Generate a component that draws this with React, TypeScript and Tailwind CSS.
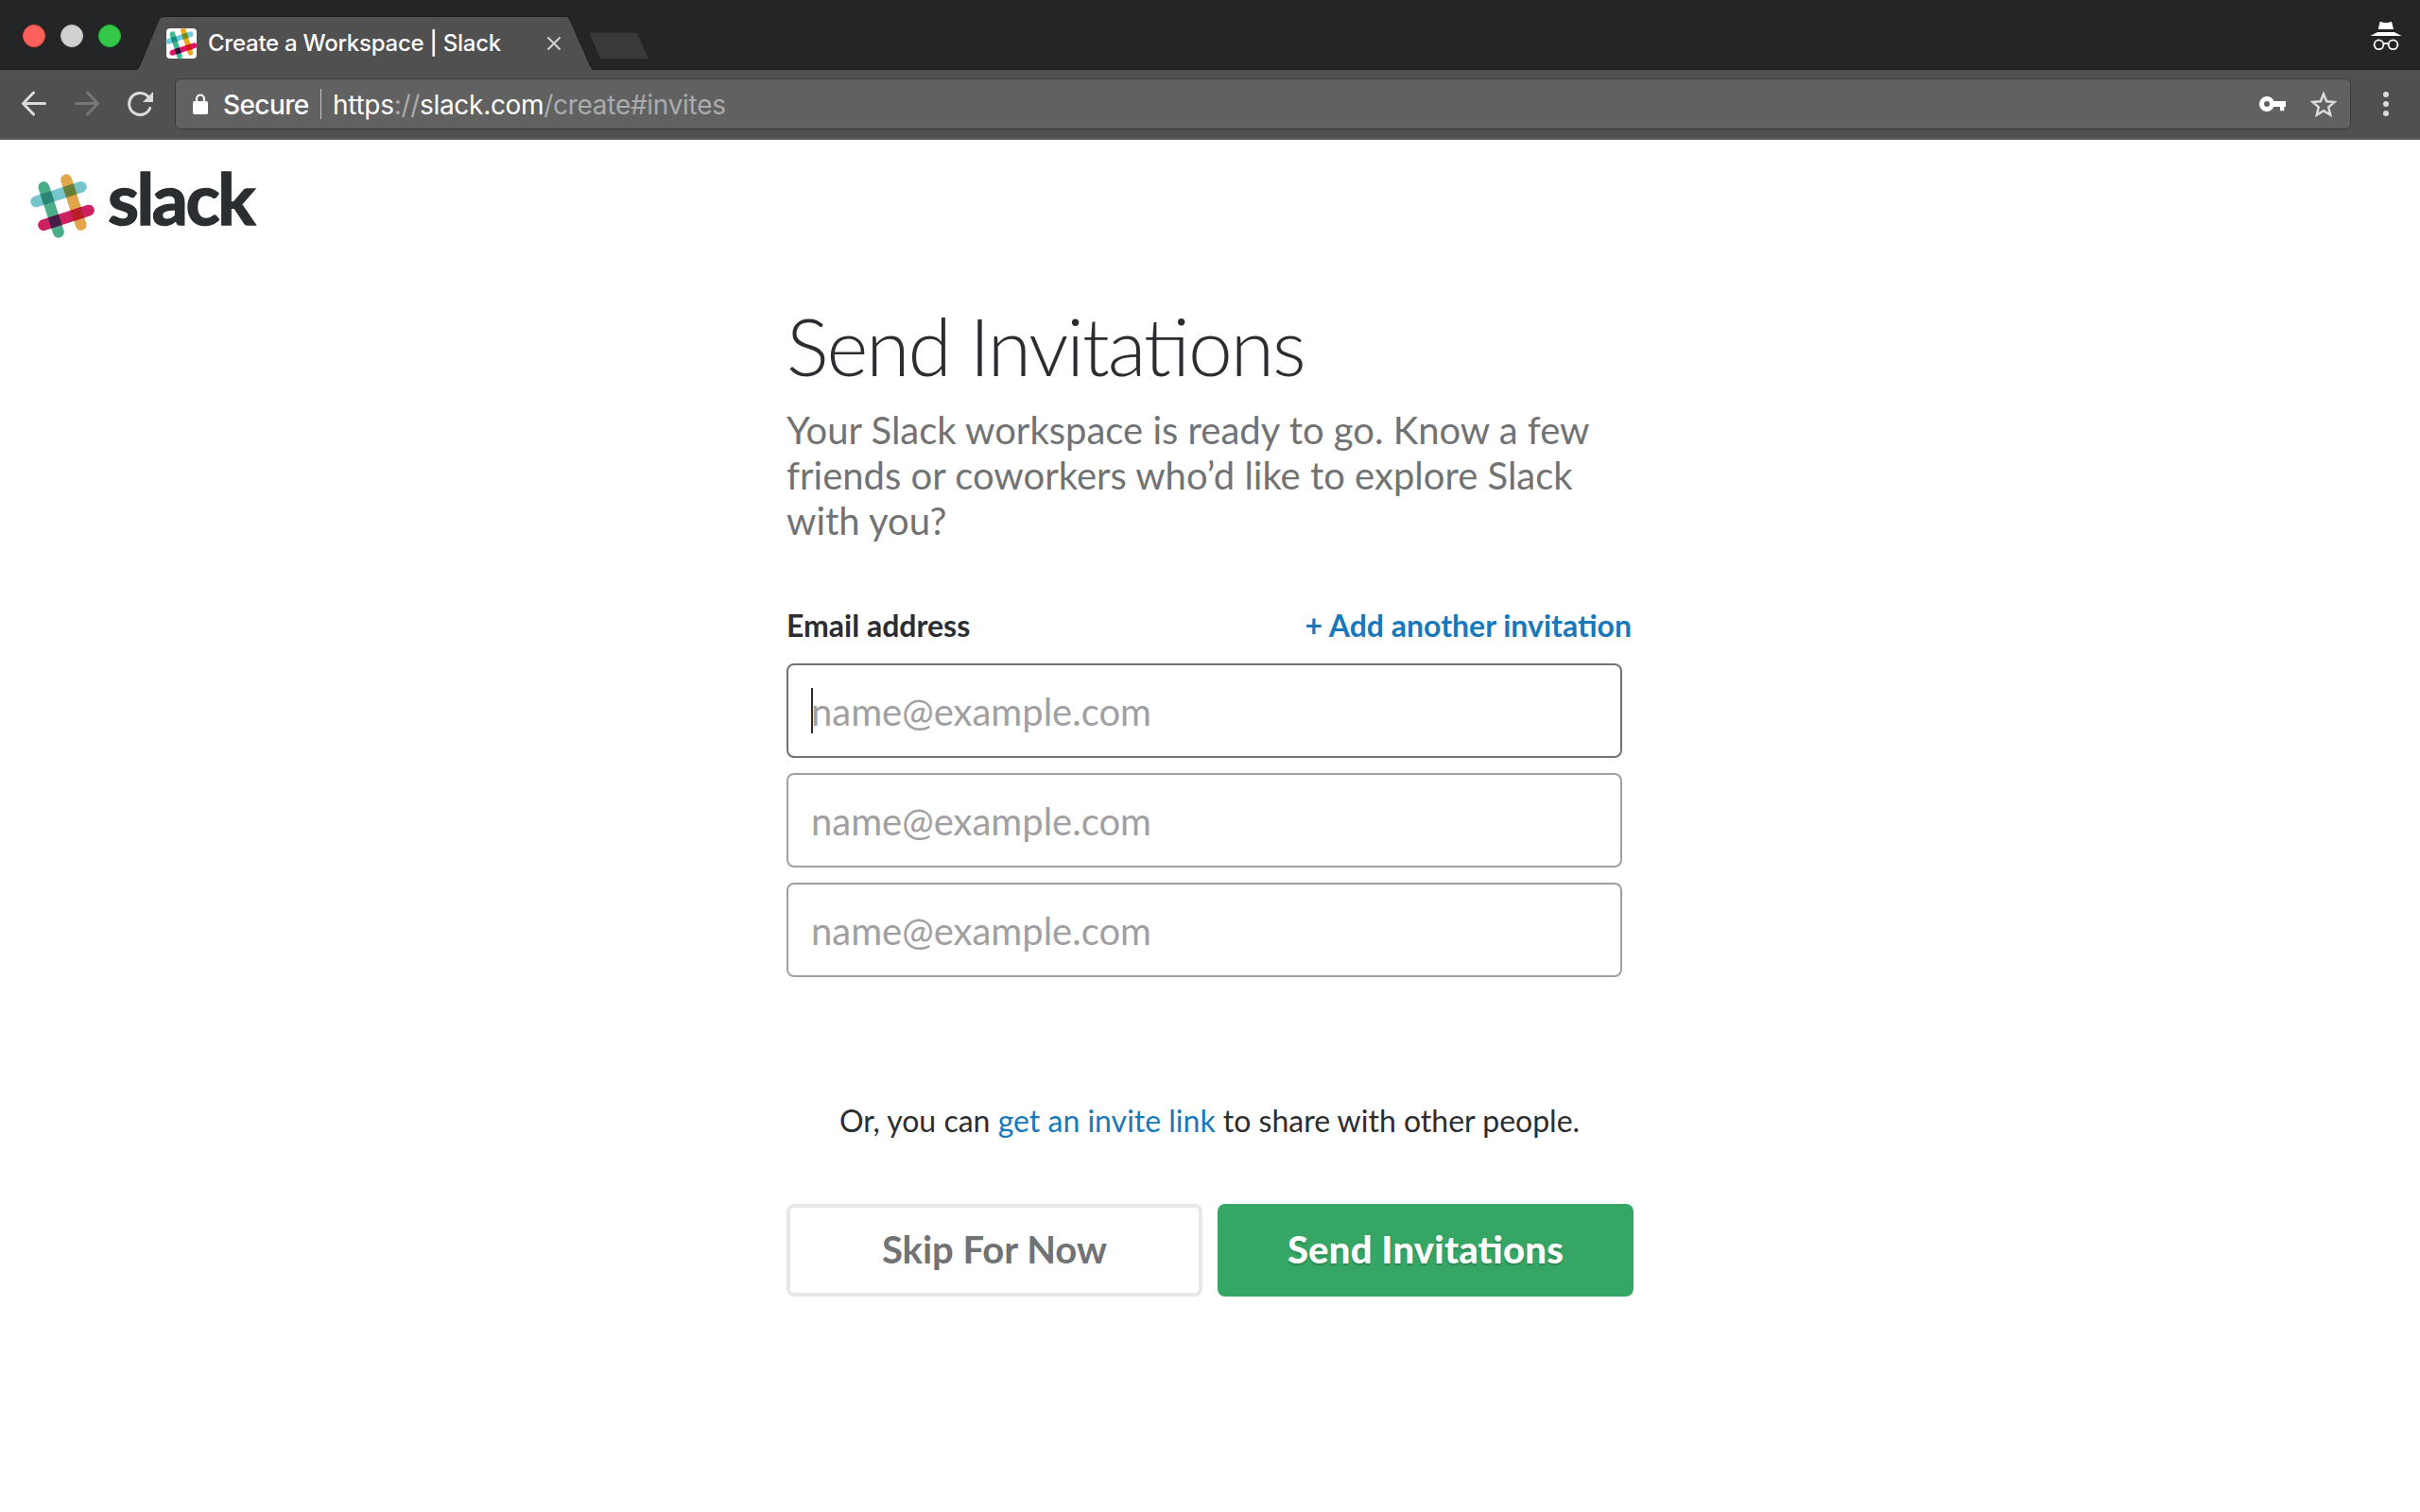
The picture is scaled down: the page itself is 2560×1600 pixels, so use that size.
import React from "react";

type HashColors = {
  blue: string;
  green: string;
  orange: string;
  red: string;
  blueGreen: string;
  blueOrange: string;
  redGreen: string;
  redOrange: string;
};

const logoColors: HashColors = {
  blue: "#77c5cc",
  green: "#4aaf88",
  orange: "#e1a64c",
  red: "#cc2060",
  blueGreen: "#2c8674",
  blueOrange: "#66803b",
  redGreen: "#431f46",
  redOrange: "#bb1f2a",
};

const faviconColors: HashColors = {
  blue: "#6fcbdf",
  green: "#3eb991",
  orange: "#ebab20",
  red: "#e31466",
  blueGreen: "#16927c",
  blueOrange: "#6e8a1e",
  redGreen: "#340b36",
  redOrange: "#cf1b14",
};

function SlackHash({ colors, className }: { colors: HashColors; className: string }) {
  return (
    <svg viewBox="-35 -35 70 70" className={className}>
      <g transform="rotate(-18)">
        <rect x="-31" y="-18.9" width="62" height="11.8" rx="5.9" fill={colors.blue} />
        <rect x="-18.4" y="-31" width="11.8" height="62" rx="5.9" fill={colors.green} />
        <rect x="6.6" y="-31" width="11.8" height="62" rx="5.9" fill={colors.orange} />
        <rect x="-31" y="7.1" width="62" height="11.8" rx="5.9" fill={colors.red} />
        <rect x="-18.4" y="-18.9" width="11.8" height="11.8" fill={colors.blueGreen} />
        <rect x="6.6" y="-18.9" width="11.8" height="11.8" fill={colors.blueOrange} />
        <rect x="-18.4" y="7.1" width="11.8" height="11.8" fill={colors.redGreen} />
        <rect x="6.6" y="7.1" width="11.8" height="11.8" fill={colors.redOrange} />
      </g>
    </svg>
  );
}

function TabStrip() {
  return (
    <div className="flex h-[74px] items-start border-b border-[#1b1c1e] bg-[#242527]">
      <div className="flex gap-4 pt-[26px] pl-6">
        <span className="size-6 rounded-full border border-[#e9514c] bg-[#fc605b]" />
        <span className="size-6 rounded-full border border-[#c4c4c4] bg-[#d0d0d0]" />
        <span className="size-6 rounded-full border border-[#27b637] bg-[#34c84a]" />
      </div>

      <div className="relative ml-3.5 flex h-[74px] w-[488px] shrink-0 pl-[34px]">
        <svg viewBox="0 0 488 74" className="absolute inset-0 h-[74px] w-[488px]">
          <path
            d="M1 74 Q4 74 5.500 70 L26 21 Q27.500 17.500 30 17.500 H457 Q459.500 17.500 461 21 L482.500 70 Q484 74 487 74Z"
            fill="#505050"
          />
          <path
            d="M1 73.500 Q4 73.500 5.500 70 L26 21 Q27.500 17.500 30 17.500 H457 Q459.500 17.500 461 21 L482.500 70 Q484 73.500 487 73.500"
            fill="none"
            stroke="#1b1c1e"
          />
        </svg>
        <span className="relative mt-[30px] flex size-8 shrink-0 items-center justify-center rounded bg-white">
          <SlackHash colors={faviconColors} className="size-[34px] shrink-0" />
        </span>
        <span className="relative mt-[30px] ml-3 w-[318px] text-[24px] leading-8 font-medium tracking-[-0.25px] whitespace-nowrap text-white">
          Create a Workspace | Slack
        </span>
        <svg viewBox="0 0 16 16" className="relative mt-[38px] ml-[40px] size-4" stroke="#d4d4d4" strokeWidth="2">
          <path d="M1.500 1.500 L14.500 14.500 M14.500 1.500 L1.500 14.500" />
        </svg>
      </div>

      <svg viewBox="0 0 66 32" className="mt-[33px] -ml-2 h-8 w-[66px]">
        <path
          d="M3 1 H49 Q52 1 53.500 4 L64 27.500 Q65 30 62.500 30 H16 Q13 30 11.500 27 L1.500 3.500 Q.5 1 3 1Z"
          fill="#393939"
          stroke="#1f2022"
        />
      </svg>

      <svg viewBox="0 0 34 32" className="mt-[22px] mr-[19px] ml-auto h-8 w-[34px]">
        <path d="M10.500 1.500 Q11 .5 12.500 1.200 Q17 3 21.500 1.200 Q22.500 .5 23.200 1.500 L25 9 H8.800Z" fill="#fff" />
        <path d="M8 12 H26 L33.500 16 H.5Z" fill="#fff" />
        <g fill="none" stroke="#fff" strokeWidth="1.800">
          <circle cx="9.500" cy="25.300" r="4.900" />
          <circle cx="24.500" cy="25.300" r="4.900" />
          <path d="M14 24.800 Q17 23 20 24.800" />
        </g>
      </svg>
    </div>
  );
}

function Toolbar() {
  return (
    <div className="flex h-[74px] items-center border-b-2 border-[#5e5e5e] bg-[#505050] pl-[22px]">
      <svg viewBox="0 0 28 28" className="size-7" fill="none" stroke="#dcdcdc" strokeWidth="3" strokeLinecap="round" strokeLinejoin="round">
        <path d="M25.500 13.500 H3 M13.500 2 L2.500 13.500 L13.500 25" />
      </svg>
      <svg viewBox="0 0 28 28" className="ml-7 size-7" fill="none" stroke="#777777" strokeWidth="3" strokeLinecap="round" strokeLinejoin="round">
        <path d="M2.500 13.500 H25 M14.500 2 L25.500 13.500 L14.500 25" />
      </svg>
      <svg viewBox="0 0 28 28" className="ml-7 size-7">
        <path
          d="M23.300 7 A11.500 11.500 0 1 0 24.700 18.500"
          fill="none"
          stroke="#dcdcdc"
          strokeWidth="3"
          strokeLinecap="round"
        />
        <path d="M28 1 V12 H17Z" fill="#dcdcdc" />
      </svg>

      <div className="ml-[23px] flex h-[54px] w-[2302px] items-center rounded-md border border-[#3b3b3b] bg-[#616161] pl-[18px]">
        <svg viewBox="0 0 16 22" className="h-[22px] w-4">
          <path d="M4 9 V5.500 A4 4 0 0 1 12 5.500 V9" fill="none" stroke="#fff" strokeWidth="2.200" />
          <rect y="8" width="16" height="14" rx="1.800" fill="#fff" />
        </svg>
        <span className="mt-0.5 ml-4 w-[103px] text-[28px] leading-8 font-medium tracking-[-0.6px] text-white">Secure</span>
        <span className="h-8 w-px bg-[#c9c9c9]" />
        <span className="mt-0.5 ml-3 text-[28px] leading-8 tracking-[-0.3px] whitespace-nowrap text-[#ababab]">
          <span className="text-white">https</span>://<span className="text-white">slack.com</span>/create#invites
        </span>
        <svg viewBox="0 0 28 16" className="mr-[25px] ml-auto h-4 w-7" fill="#fff">
          <path
            fillRule="evenodd"
            d="M8 0 A8 8 0 1 0 15.400 11 H22 V15.300 H26.300 V11 H28 V5 H15.400 A8 8 0 0 0 8 0 M8 5 A3 3 0 1 1 8 11 A3 3 0 1 1 8 5Z"
          />
        </svg>
        <svg viewBox="0 0 30 29" className="mr-[13px] h-[29px] w-[30px]">
          <path
            d="M15 3.500 L18.200 11.300 L26.500 12 L20.200 17.400 L22.200 25.600 L15 21.200 L7.800 25.600 L9.800 17.400 L3.500 12 L11.800 11.300Z"
            fill="none"
            stroke="#dcdcdc"
            strokeWidth="2.400"
          />
        </svg>
      </div>

      <div className="ml-[34px] flex flex-col gap-1">
        <span className="size-1.5 rounded-full bg-[#dcdcdc]" />
        <span className="size-1.5 rounded-full bg-[#dcdcdc]" />
        <span className="size-1.5 rounded-full bg-[#dcdcdc]" />
      </div>
    </div>
  );
}

function EmailField({ active = false }: { active?: boolean }) {
  return (
    <div
      className={
        active
          ? "flex h-[100px] w-[884px] items-center rounded-lg border-2 border-[#717274] pl-6"
          : "flex h-[100px] w-[884px] items-center rounded-lg border-2 border-[#a0a0a2] pl-6"
      }
    >
      {active && <span className="-mr-0.5 h-12 w-0.5 bg-[#2c2d30]" />}
      <span className="mt-0.5 text-[40px] leading-[48px] text-[#a0a0a2]">name@example.com</span>
    </div>
  );
}

export default function App() {
  return (
    <div className="h-[1600px] w-[2560px] overflow-hidden bg-white font-['Lato',sans-serif] text-[#2c2d30]">
      <header className="font-['Inter',sans-serif]">
        <TabStrip />
        <Toolbar />
      </header>

      <div className="flex h-[152px] items-start pt-[35px] pl-[31px]">
        <SlackHash colors={logoColors} className="size-[70px]" />
        <span className="-mt-3.5 ml-[13px] text-[75px] leading-[80px] font-bold tracking-[-2.4px] text-[#2b2e31] [-webkit-text-stroke:1.5px_#2b2e31]">
          slack
        </span>
      </div>

      <main className="ml-[832px] w-[896px]">
        <h1 className="pt-[16px] text-[84px] leading-[100px] font-light tracking-[-2px] [font-feature-settings:'liga'_1]">
          Send Invitations
        </h1>
        <p className="pt-[15px] text-[40px] leading-[48px] text-[#717274]">
          Your Slack workspace is ready to go. Know a few
          <br />
          friends or coworkers who’d like to explore Slack
          <br />
          with you?
        </p>

        <div className="mt-[63px] flex h-12 items-center justify-between pr-0.5 text-[32px] leading-[48px] font-bold">
          <span>Email address</span>
          <a className="text-[#1779ba]">+ Add another invitation</a>
        </div>

        <div className="mt-4 flex flex-col gap-4">
          <EmailField active />
          <EmailField />
          <EmailField />
        </div>

        <p className="mt-[128px] pr-px text-center text-[32px] leading-[48px] whitespace-nowrap">
          Or, you can <a className="text-[#1779ba]">get an invite link</a> to share with other people.
        </p>

        <div className="mt-16 flex gap-4">
          <button className="h-[98px] w-[440px] rounded-lg border-4 border-[#e8e8e8] pb-[3px] text-[40px] font-bold text-[#717274]">
            Skip For Now
          </button>
          <button className="h-[98px] w-[440px] rounded-lg bg-[#36a664] pb-[3px] text-[40px] font-black tracking-[0.2px] text-white [font-feature-settings:'liga'_1] [text-shadow:0_2px_2px_rgba(0,0,0,0.2)]">
            Send Invitations
          </button>
        </div>
      </main>
    </div>
  );
}
